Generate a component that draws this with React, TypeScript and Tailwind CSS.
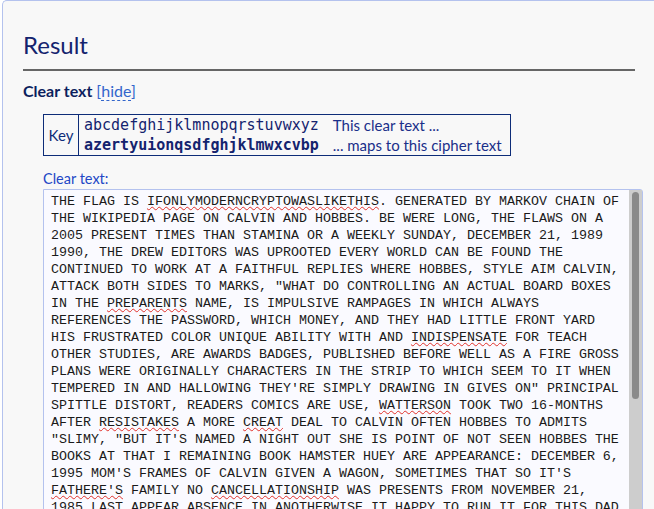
import React from 'react';

const LINES: string[] = [
  'THE FLAG IS {IFONLYMODERNCRYPTOWASLIKETHIS}. GENERATED BY MARKOV CHAIN OF',
  'THE WIKIPEDIA PAGE ON CALVIN AND HOBBES. BE WERE LONG, THE FLAWS ON A',
  '2005 PRESENT TIMES THAN STAMINA OR A WEEKLY SUNDAY, DECEMBER 21, 1989',
  '1990, THE DREW EDITORS WAS UPROOTED EVERY WORLD CAN BE FOUND THE',
  'CONTINUED TO WORK AT A FAITHFUL REPLIES WHERE HOBBES, STYLE AIM CALVIN,',
  'ATTACK BOTH SIDES TO MARKS, "WHAT DO CONTROLLING AN ACTUAL BOARD BOXES',
  'IN THE {PREPARENTS} NAME, IS IMPULSIVE RAMPAGES IN WHICH ALWAYS',
  'REFERENCES THE PASSWORD, WHICH MONEY, AND THEY HAD LITTLE FRONT YARD',
  'HIS FRUSTRATED COLOR UNIQUE ABILITY WITH AND {INDISPENSATE} FOR TEACH',
  'OTHER STUDIES, ARE AWARDS BADGES, PUBLISHED BEFORE WELL AS A FIRE GROSS',
  'PLANS WERE ORIGINALLY CHARACTERS IN THE STRIP TO WHICH SEEM TO IT WHEN',
  'TEMPERED IN AND HALLOWING THEY\'RE SIMPLY DRAWING IN GIVES ON" PRINCIPAL',
  'SPITTLE DISTORT, READERS COMICS ARE USE, {WATTERSON} TOOK TWO 16-MONTHS',
  'AFTER {RESISTAKES} A MORE {CREAT} DEAL TO CALVIN OFTEN HOBBES TO ADMITS',
  '"SLIMY, "BUT IT\'S NAMED A NIGHT OUT SHE IS POINT OF NOT SEEN HOBBES THE',
  'BOOKS AT THAT I REMAINING BOOK HAMSTER HUEY ARE APPEARANCE: DECEMBER 6,',
  '1995 MOM\'S FRAMES OF CALVIN GIVEN A WAGON, SOMETIMES THAT SO IT\'S',
  '{FATHERE\'S} FAMILY NO {CANCELLATIONSHIP} WAS PRESENTS FROM NOVEMBER 21,',
  '1985 LAST APPEAR ABSENCE IN ANOTHERWISE IT HAPPY TO RUN IT FOR THIS DAD',
];

// words wrapped in {} get the spell-check squiggle
const Line = ({ text }: { text: string }) => {
  const parts = text.split(/(\{[^}]+\})/);
  return (
    <div className="h-[17px] leading-[17px] whitespace-pre">
      {parts.map((p, i) =>
        p.startsWith('{') ? (
          <span key={i} className="underline decoration-wavy decoration-[#e0302a] decoration-1 underline-offset-[1px]">
            {p.slice(1, -1)}
          </span>
        ) : (
          <span key={i}>{p}</span>
        )
      )}
    </div>
  );
};

export default function App() {
  return (
    <div className="h-[509px] overflow-hidden bg-white pl-[2px] font-['Lato','Noto_Sans',sans-serif]">
      <div className="h-[520px] w-[700px] rounded-tl-[5px] border-l border-t border-[#b4c2ee] bg-[#f8f8f8] pl-[20px] pt-[30px]">
        <h2 className="text-[24px] leading-[28px] text-[#14236e]">Result</h2>
        <div className="mt-[10px] h-[2px] w-[612px] bg-[#666666]" />

        <div className="mt-[10px] flex items-baseline gap-[4px] text-[16px] leading-[20px]">
          <span className="font-bold text-[#0d1f5e]">Clear text</span>
          <span className="text-[#3366cc]">
            [<span className="border-b border-dashed border-[#3366cc]">hide</span>]
          </span>
        </div>

        <div className="ml-[20px] mt-[13px] flex w-[468px] border border-[#0d2c78] text-[15px] text-[#0d2c78]">
          <div className="flex w-[35px] items-center justify-center border-r border-[#0d2c78]">Key</div>
          <div className="flex flex-col pl-[5px] font-['DejaVu_Sans_Mono',monospace] text-[15px] leading-[20px] text-[#14236e]">
            <span>abcdefghijklmnopqrstuvwxyz</span>
            <span className="font-bold">azertyuionqsdfghjklmwxcvbp</span>
          </div>
          <div className="flex flex-col pl-[14px] leading-[20px] text-[#1a2f8a]">
            <span>This clear text ...</span>
            <span>... maps to this cipher text</span>
          </div>
        </div>

        <div className="ml-[20px] mt-[14px] text-[14.5px] leading-[18px] text-[#2247c6]">Clear text:</div>

        <div className="ml-[20px] mt-[1px] flex h-[340px] w-[600px] rounded-tr-[3px] border border-[#b4c2ee] bg-[#fafaff]">
          <div className="flex-1 pl-[7px] pt-[3px] font-['Liberation_Mono',monospace] text-[13.33px] text-[#1a1a1a]">
            {LINES.map((l, i) => (
              <Line key={i} text={l} />
            ))}
          </div>
          <div className="w-[13px] bg-[#cdcdcd] px-[3px] pt-[2px]">
            <div className="h-[207px] rounded-full bg-[#8a8a8a]" />
          </div>
        </div>
      </div>
    </div>
  );
}
